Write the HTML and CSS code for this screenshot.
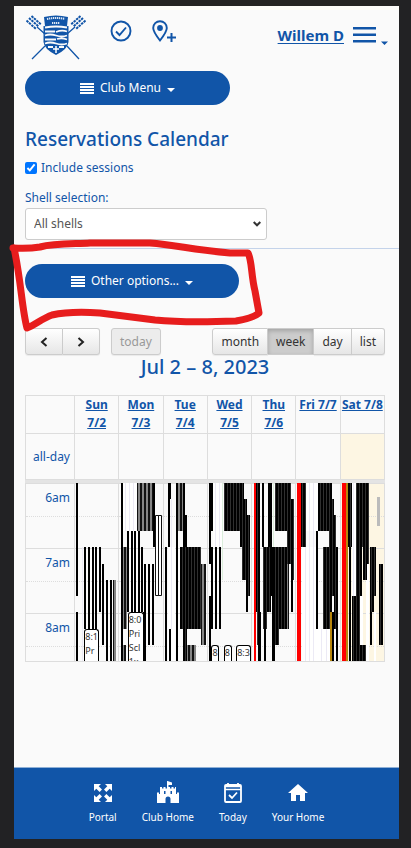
FILE: index.html
```html
<!DOCTYPE html>
<html lang="en">
<head>
<meta charset="utf-8">
<meta name="viewport" content="width=device-width, initial-scale=1">
<title>Reservations Calendar</title>
<link rel="stylesheet" href="styles.css">
</head>
<body>
<div class="app">
  <header class="top">
    <a class="logo" href="#" aria-label="Club">
      <svg width="62" height="46" viewBox="0 0 62 46">
        <g stroke="#1155a8" fill="none">
          <path d="M12 12L20 19M50 12L42 19M20 31L7 44M42 31L54 44" stroke-width="1.300"/>
          <path d="M1.500 5.500L11 14M4 3L13.500 11.500M6.500 1L16 9.500M60.500 5.500L51 14M58 3L48.500 11.500M55.500 1L46 9.500" stroke-width="2" stroke-dasharray="2.500 .8"/>
        </g>
        <path d="M19 2Q31-1 43 2L42 11H43.500V27Q43 34 31 40Q19 34 18.500 27V11H20Z" fill="#1155a8"/>
        <path d="M20 12.500Q31 10.500 42 12.500M20 16.500H30M31 17Q37 14.500 42 16.500M20 20.500Q25 18.500 31 20.500T42 20.500M20 24.500H31M32 24Q37 22.500 42 24.500M20 28.500Q25 26.500 31 28.500T42 28.500M23 32H28M34 32H39" stroke="#fafafa" stroke-width="1.800" fill="none"/>
        <path d="M22 4Q31 2 40 4M27 8H35" stroke="#dce7f4" stroke-width="2" stroke-dasharray="1.300 .7" fill="none"/>
        <path d="M31 31V38M28 34H34" stroke="#fff" stroke-width="1.500"/>
      </svg>
    </a>
    <button class="icon-btn" aria-label="Check in">
      <svg width="22" height="22" viewBox="0 0 22 22" fill="none" stroke="#1155a8" stroke-width="1.900"><circle cx="11" cy="11" r="9.500"/><path d="M6 11.500L9.500 15L16 7.500"/></svg>
    </button>
    <button class="icon-btn" aria-label="Add location">
      <svg width="24" height="23" viewBox="0 0 24 23" fill="none" stroke="#1155a8" stroke-width="1.900"><path d="M8 20.500C4.500 16 1.200 11.500 1.200 8A6.800 6.800 0 0 1 14.800 8C14.800 11.500 11.500 16 8 20.500Z"/><circle cx="8" cy="8" r="2.900" fill="#1155a8" stroke="none"/><path d="M15 17.500H24M19.500 13V22" stroke-width="2"/></svg>
    </button>
    <a class="user" href="#">Willem D</a>
    <button class="burger" aria-label="Menu">
      <svg width="35" height="20" viewBox="0 0 35 20" fill="#1155a8"><path d="M0 0H23V2.500H0ZM0 6.500H23V9H0ZM0 13H23V15.500H0ZM28 14.500H35L31.500 18Z"/></svg>
    </button>
  </header>
  <main>
    <section class="filters">
      <button class="pill">
        <svg width="14" height="11" viewBox="0 0 14 11" fill="#fff"><path d="M0 0H14V2H0ZM0 3H14V5H0ZM0 6H14V8H0ZM0 9H14V11H0Z"/></svg>
        Club Menu <span class="caret"></span>
      </button>
      <h1>Reservations Calendar</h1>
      <div class="check"><input type="checkbox" id="sessions" checked><label for="sessions">Include sessions</label></div>
      <label class="field-label" for="shell">Shell selection:</label>
      <div class="select-wrap">
        <select id="shell"><option>All shells</option></select>
        <svg class="chevron" width="8" height="6" viewBox="0 0 8 6" fill="none" stroke="#333" stroke-width="2"><path d="M.7 1L4 4.300L7.300 1"/></svg>
      </div>
    </section>
    <section class="options">
      <button class="pill pill-wide">
        <svg width="14" height="11" viewBox="0 0 14 11" fill="#fff"><path d="M0 0H14V2H0ZM0 3H14V5H0ZM0 6H14V8H0ZM0 9H14V11H0Z"/></svg>
        Other options... <span class="caret"></span>
      </button>
      <svg class="marker" width="256" height="94" viewBox="9 239 256 94" fill="none" stroke="#e71d1d" stroke-width="7" stroke-linecap="round" stroke-linejoin="round"><path d="M13 248Q28 249 40 247C55 243 75 244 90 243H150C175 245 195 250 230 253H248C252 260 251 275 255 291L259 313Q253 318 236 321C210 322 175 322 155 320L100 313Q70 311 52 315C43 318 35 325 27 328C22 310 21 280 14 248"/></svg>
    </section>
    <section class="calendar">
      <div class="toolbar">
        <div class="group">
          <button aria-label="Previous" class="arrow"><svg width="8" height="10" viewBox="0 0 8 10"><path d="M6.500 1L2 5L6.500 9"/></svg></button><button aria-label="Next" class="arrow"><svg width="8" height="10" viewBox="0 0 8 10"><path d="M1.500 1L6 5L1.500 9"/></svg></button>
        </div>
        <button class="today" disabled>today</button>
        <div class="group views"><button>month</button><button class="active">week</button><button>day</button><button>list</button></div>
      </div>
      <h2>Jul 2 – 8, 2023</h2>
      <table class="days">
        <thead>
          <tr><th class="axis"></th><th><a href="#">Sun<br>7/2</a></th><th><a href="#">Mon<br>7/3</a></th><th><a href="#">Tue<br>7/4</a></th><th><a href="#">Wed<br>7/5</a></th><th><a href="#">Thu<br>7/6</a></th><th><a href="#">Fri 7/7</a></th><th><a href="#">Sat 7/8</a></th></tr>
        </thead>
        <tbody>
          <tr class="allday"><td class="axis">all-day</td><td></td><td></td><td></td><td></td><td></td><td></td><td class="now"></td></tr>
        </tbody>
      </table>
      <div class="times">
        <table class="days slots">
          <tbody>
            <tr><td class="axis">6am</td><td></td><td></td><td></td><td></td><td></td><td></td><td class="now"></td></tr>
            <tr class="half"><td class="axis"></td><td></td><td></td><td></td><td></td><td></td><td></td><td class="now"></td></tr>
            <tr><td class="axis">7am</td><td></td><td></td><td></td><td></td><td></td><td></td><td class="now"></td></tr>
            <tr class="half"><td class="axis"></td><td></td><td></td><td></td><td></td><td></td><td></td><td class="now"></td></tr>
            <tr><td class="axis">8am</td><td></td><td></td><td></td><td></td><td></td><td></td><td class="now"></td></tr>
            <tr class="half"><td class="axis"></td><td></td><td></td><td></td><td></td><td></td><td></td><td class="now"></td></tr>
          </tbody>
        </table>
        <div class="events">
          <svg width="100%" height="178" viewBox="75 483 310 178" preserveAspectRatio="none">
            <defs>
              <pattern id="thin" width="3" height="178" patternUnits="userSpaceOnUse"><path d="M0 0H3V178H0Z" fill="#000"/><path d="M2 0H3V178H2Z" fill="#2f2f2f"/></pattern>
              <pattern id="loose" width="4" height="178" patternUnits="userSpaceOnUse"><path d="M0 0H4V178H0Z" fill="#111"/><path d="M2 0H4V178H2Z" fill="#858585"/></pattern>
            </defs>
            <!-- pale sessions -->
            <path fill="#fff" d="M122 483H137V531H122ZM168 547H175V661H168ZM213 483H223V547H213ZM302 547H316V661H302ZM316 629H330V661H316ZM306 483H318V531H306ZM352 483H356V596H352ZM360 596H363V645H360ZM366 547H369V661H366ZM374 612H376V661H374Z"/>
            <path fill="#eceaf5" d="M82 547H83V661H82ZM125 483H126V531H125ZM129 483H130V531H129ZM133 483H134V531H133ZM171 499H172V629H171ZM215 483H216V547H215ZM219 483H220V547H219ZM309 483H310V661H309ZM313 483H314V661H313ZM305 547H306V661H305ZM321 629H322V661H321ZM326 629H327V661H326ZM353 483H354V596H353Z"/>
            <path fill="#dbeedb" d="M222 483H223V580H222ZM273 483H274V580H273Z"/>
            <!-- two-tone stacks -->
            <path fill="url(#loose)" d="M137 483H154V531H137ZM121 547H127V629H121ZM178 483H184V531H178ZM201 564H206V645H201ZM186 645H196V661H186ZM113 580H116V661H113ZM121 645H126V661H121ZM287 547H289V629H287Z"/>
            <!-- dense stacks -->
            <path fill="url(#thin)" d="M180 547H201V629H180ZM183 629H187V661H183ZM224 483H244V531H224ZM240 531H246V547H240ZM242 547H247V580H242ZM244 499H247V547H244ZM246 515H250V596H246ZM246 596H248V612H246ZM255 483H260V612H255ZM257 612H260V645H257ZM265 547H271V612H265ZM263 547H267V629H263ZM275 483H291V531H275ZM287 531H291V564H287ZM291 499H294V580H291ZM275 547H287V629H275ZM275 629H279V645H275ZM301 483H306V547H301ZM318 483H332V531H318ZM329 531H334V547H329ZM332 499H334V547H332ZM334 515H336V547H334ZM323 547H332V629H323ZM331 547H338V596H331ZM334 596H338V629H334ZM348 483H352V547H348ZM356 483H369V547H356ZM356 547H362V596H356ZM352 596H360V661H352ZM363 547H367V580H363ZM365 547H369V564H365ZM370 547H376V596H370ZM370 596H374V612H370ZM379 564H383V645H379ZM360 645H366V661H360Z"/>
            <!-- single shells -->
            <path fill="#000" d="M76 483H78V596H76ZM76 612H78V661H76ZM84 547H86V629H84ZM88 547H90V629H88ZM92 547H94V629H92ZM95 547H97V629H95ZM99 547H101V612H99ZM102 564H104V645H102ZM106 580H108V661H106ZM110 580H112V661H110ZM121 483H123V661H121ZM127 531H129V612H127ZM131 531H133V612H131ZM134 531H136V612H134ZM138 531H140V612H138ZM141 547H143V612H141ZM143 612H145V661H143ZM144 564H146V661H144ZM148 564H150V645H148ZM152 564H154V645H152ZM153 483H155V547H153ZM165 547H167V661H165ZM168 483H170V547H168ZM170 483H171V499H170ZM169 629H171V661H169ZM176 483H178V661H176ZM184 515H187V547H184ZM183 483H185V547H183ZM209 483H213V531H209ZM209 531H211V564H209ZM211 547H213V629H211ZM215 547H217V629H215ZM219 547H221V629H219ZM209 596H211V661H209ZM258 612H261V661H258ZM262 483H264V547H262ZM264 547H266V661H264ZM268 483H272V547H268ZM272 580H275V661H272ZM270 547H275V596H270ZM291 580H293V612H291ZM316 531H318V629H316ZM336 596H338V661H336ZM332 612H334V661H332ZM349 547H351V661H349ZM370 612H372V645H370Z"/>
            <path fill="#fff" stroke="#111" d="M155.500 515.500H158.500V595.500H155.500ZM158.500 515.500H161.500V595.500H158.500Z"/>
            <path fill="#f00" d="M254 483H256V661H254ZM297 483H301V661H297ZM342 483H346V661H342Z"/>
            <path fill="#b8860b" d="M330 612H332V661H330ZM346 483H348V661H346Z"/>
            <path fill="#bbb" d="M377 497H380V526H377Z"/>
          </svg>
          <div class="event sun">8:1<br>Pr</div>
          <div class="event mon">8:0<br>Pri<br>Scl<br>1x</div>
          <div class="event wed-a">8</div>
          <div class="event wed-b">8</div>
          <div class="event wed-c">8:3</div>
        </div>
      </div>
    </section>
  </main>
  <nav class="tabs">
    <a href="#"><svg width="24" height="24" viewBox="0 0 24 24" fill="#fff"><path d="M3 3H10L7.700 5.300L11 8.600L8.600 11L5.300 7.700L3 10ZM21 3V10L18.700 7.700L15.400 11L13 8.600L16.300 5.300L14 3ZM3 21V14L5.300 16.300L8.600 13L11 15.400L7.700 18.700L10 21ZM21 21H14L16.300 18.700L13 15.400L15.400 13L18.700 16.300L21 14Z"/></svg>Portal</a>
    <a href="#"><svg width="24" height="24" viewBox="0 0 24 24" fill="#fff"><path fill-rule="evenodd" d="M11.500 0L16 1.500V4H12.500V6H14V7.500H15.500V6H17.500V7.500H19V6H20V13H21V11.500H23V22H14.500V18A2.500 2.500 0 0 0 9.500 18V22H1V11.500H3V13H4V6H6V7.500H7.500V6H9.500V7.500H11V0ZM8 10V13H9.500V10ZM14.500 10V13H16V10Z"/></svg>Club Home</a>
    <a href="#"><svg width="24" height="24" viewBox="0 0 24 24" fill="none" stroke="#fff" stroke-width="1.800"><rect x="4" y="4" width="16" height="17" rx="1"/><path d="M4 5.500H20M4 8.500H20" stroke-width="1.500"/><path d="M7 2V5M17 2V5M8 14L11 17L16 11.500"/></svg>Today</a>
    <a href="#"><svg width="24" height="24" viewBox="0 0 24 24" fill="#fff"><path d="M10 20V14H14V20H19V12H22L12 3L2 12H5V20Z"/></svg>Your Home</a>
  </nav>
</div>
</body>
</html>
```
FILE: styles.css
```css
* { box-sizing: border-box; }
body {
  margin: 0;
  min-height: 100vh;
  padding: 6px 12px 9px 14px;
  background: #222224;
  color: #1155a8;
  font: 12px/20px "Noto Sans", "Open Sans", sans-serif;
}
button, select { font: inherit; }
button { cursor: pointer; }
svg { display: block; }
.app {
  display: flex;
  flex-direction: column;
  min-height: calc(100vh - 15px);
  background: #fafafa;
}
.top {
  display: flex;
  align-items: flex-start;
  height: 65px;
  padding: 9px 11px 0;
}
.icon-btn, .burger { padding: 0; border: 0; background: none; }
.icon-btn { margin-top: 5px; margin-left: 20px; }
.logo + .icon-btn { margin-left: 23px; }
.user {
  margin: 10px 9px 0 auto;
  font-size: 15px;
  font-weight: 700;
  color: inherit;
  text-underline-offset: 2px;
}
.burger { margin-top: 12px; }
.filters {
  padding: 0 11px 8px;
  border-bottom: 1px solid #c4d3ea;
}
.pill {
  display: flex;
  align-items: center;
  justify-content: center;
  gap: 6px;
  width: 205px;
  height: 34px;
  border: 0;
  border-radius: 17px;
  background: #1155a8;
  color: #fff;
}
.pill-wide { width: 214px; }
.caret {
  margin-top: 4px;
  border: 4px solid transparent;
  border-top-color: #fff;
  border-bottom: 0;
}
h1, h2 { margin: 0; font-size: 19px; font-weight: 500; line-height: 24px; }
h1 { margin-top: 22px; }
.check { display: flex; align-items: center; gap: 4px; margin-top: 7px; }
.check input { width: 12px; height: 12px; margin: 0; accent-color: #0075ff; }
.field-label { display: block; margin-top: 10px; }
.select-wrap { display: flex; align-items: center; width: 242px; }
select {
  flex: 1;
  height: 32px;
  padding: 0 8px;
  border: 1px solid #ccc;
  border-radius: 3px;
  background: #fff;
  color: #555;
  appearance: none;
}
.chevron { margin-left: -14px; margin-right: 6px; pointer-events: none; }
.options { position: relative; padding: 15px 11px 30px; }
.marker { position: absolute; left: -5px; top: -10px; pointer-events: none; }
.calendar { padding: 0 14px 0 11px; }
.toolbar { display: flex; }
.group { display: flex; }
.views { margin-left: auto; }
.toolbar button {
  height: 27px;
  padding: 0 8px;
  border: 1px solid #ccc;
  border-left-width: 0;
  background: linear-gradient(#fff, #e6e6e6);
  color: #333;
  box-shadow: 0 1px 1px #0001;
}
.toolbar button:first-child, .toolbar .today { border-left-width: 1px; border-radius: 3px 0 0 3px; }
.toolbar button:last-child { border-radius: 0 3px 3px 0; }
.toolbar .arrow { display: flex; align-items: center; justify-content: center; width: 37px; }
.toolbar .arrow:first-child { width: 38px; }
.arrow path { fill: none; stroke: #222; stroke-width: 2; }
.toolbar .today {
  margin-left: 11px;
  border-radius: 3px;
  background: #ececec;
  color: #999;
}
.toolbar .active { background: #ccc; box-shadow: inset 0 2px 4px #0003; }
h2 { font-size: 20px; text-align: center; }
.days {
  width: 100%;
  table-layout: fixed;
  border-collapse: collapse;
}
.days th, .days td {
  padding: 0;
  border: 1px solid #ddd;
}
.days .axis { width: 49px; padding-right: 4px; text-align: right; }
.days thead { line-height: 18px; }
.calendar h2 + .days { margin-top: 16px; }
.days th { padding-bottom: 1px; vertical-align: top; white-space: nowrap; }
.days a { color: inherit; }
.allday td { height: 46px; }
.days .now { background: #fdf6e3; }
.times {
  position: relative;
  height: 182px;
  overflow: hidden;
  border-top: 3px solid #e4e4e4;
  border-bottom: 1px solid #ddd;
}
.slots td { height: 33px; border-top-color: #ddd; border-bottom: 0; vertical-align: middle; }
.slots .axis { padding-bottom: 4px; }
.slots .half td { height: 32px; border-top: 1px dotted #ddd; }
.events {
  position: absolute;
  top: 0;
  right: 0;
  bottom: 0;
  left: 50px;
}
.event {
  position: absolute;
  overflow: hidden;
  border: 1px solid #000;
  border-bottom: 0;
  border-radius: 3px 3px 0 0;
  background: #fff;
  color: #333;
  font-size: 9px;
  line-height: 14px;
}
.sun { left: 3%; top: 146px; width: 15px; height: 32px; }
.mon { left: 17%; top: 129px; width: 16px; height: 49px; }
.wed-a, .wed-b, .wed-c { top: 162px; width: 8px; height: 16px; }
.wed-a { left: 44%; }
.wed-b { left: 48%; }
.wed-c { left: 52%; width: 15px; }
.tabs {
  display: flex;
  justify-content: center;
  gap: 25px;
  height: 72px;
  margin-top: auto;
  padding: 13px 0 0;
  border-top: 1px solid #8fb0d6;
  background: #1155a8;
}
.tabs a {
  display: flex;
  flex-direction: column;
  align-items: center;
  gap: 4px;
  color: #fff;
  font-size: 10px;
  line-height: 16px;
  text-decoration: none;
}
```
